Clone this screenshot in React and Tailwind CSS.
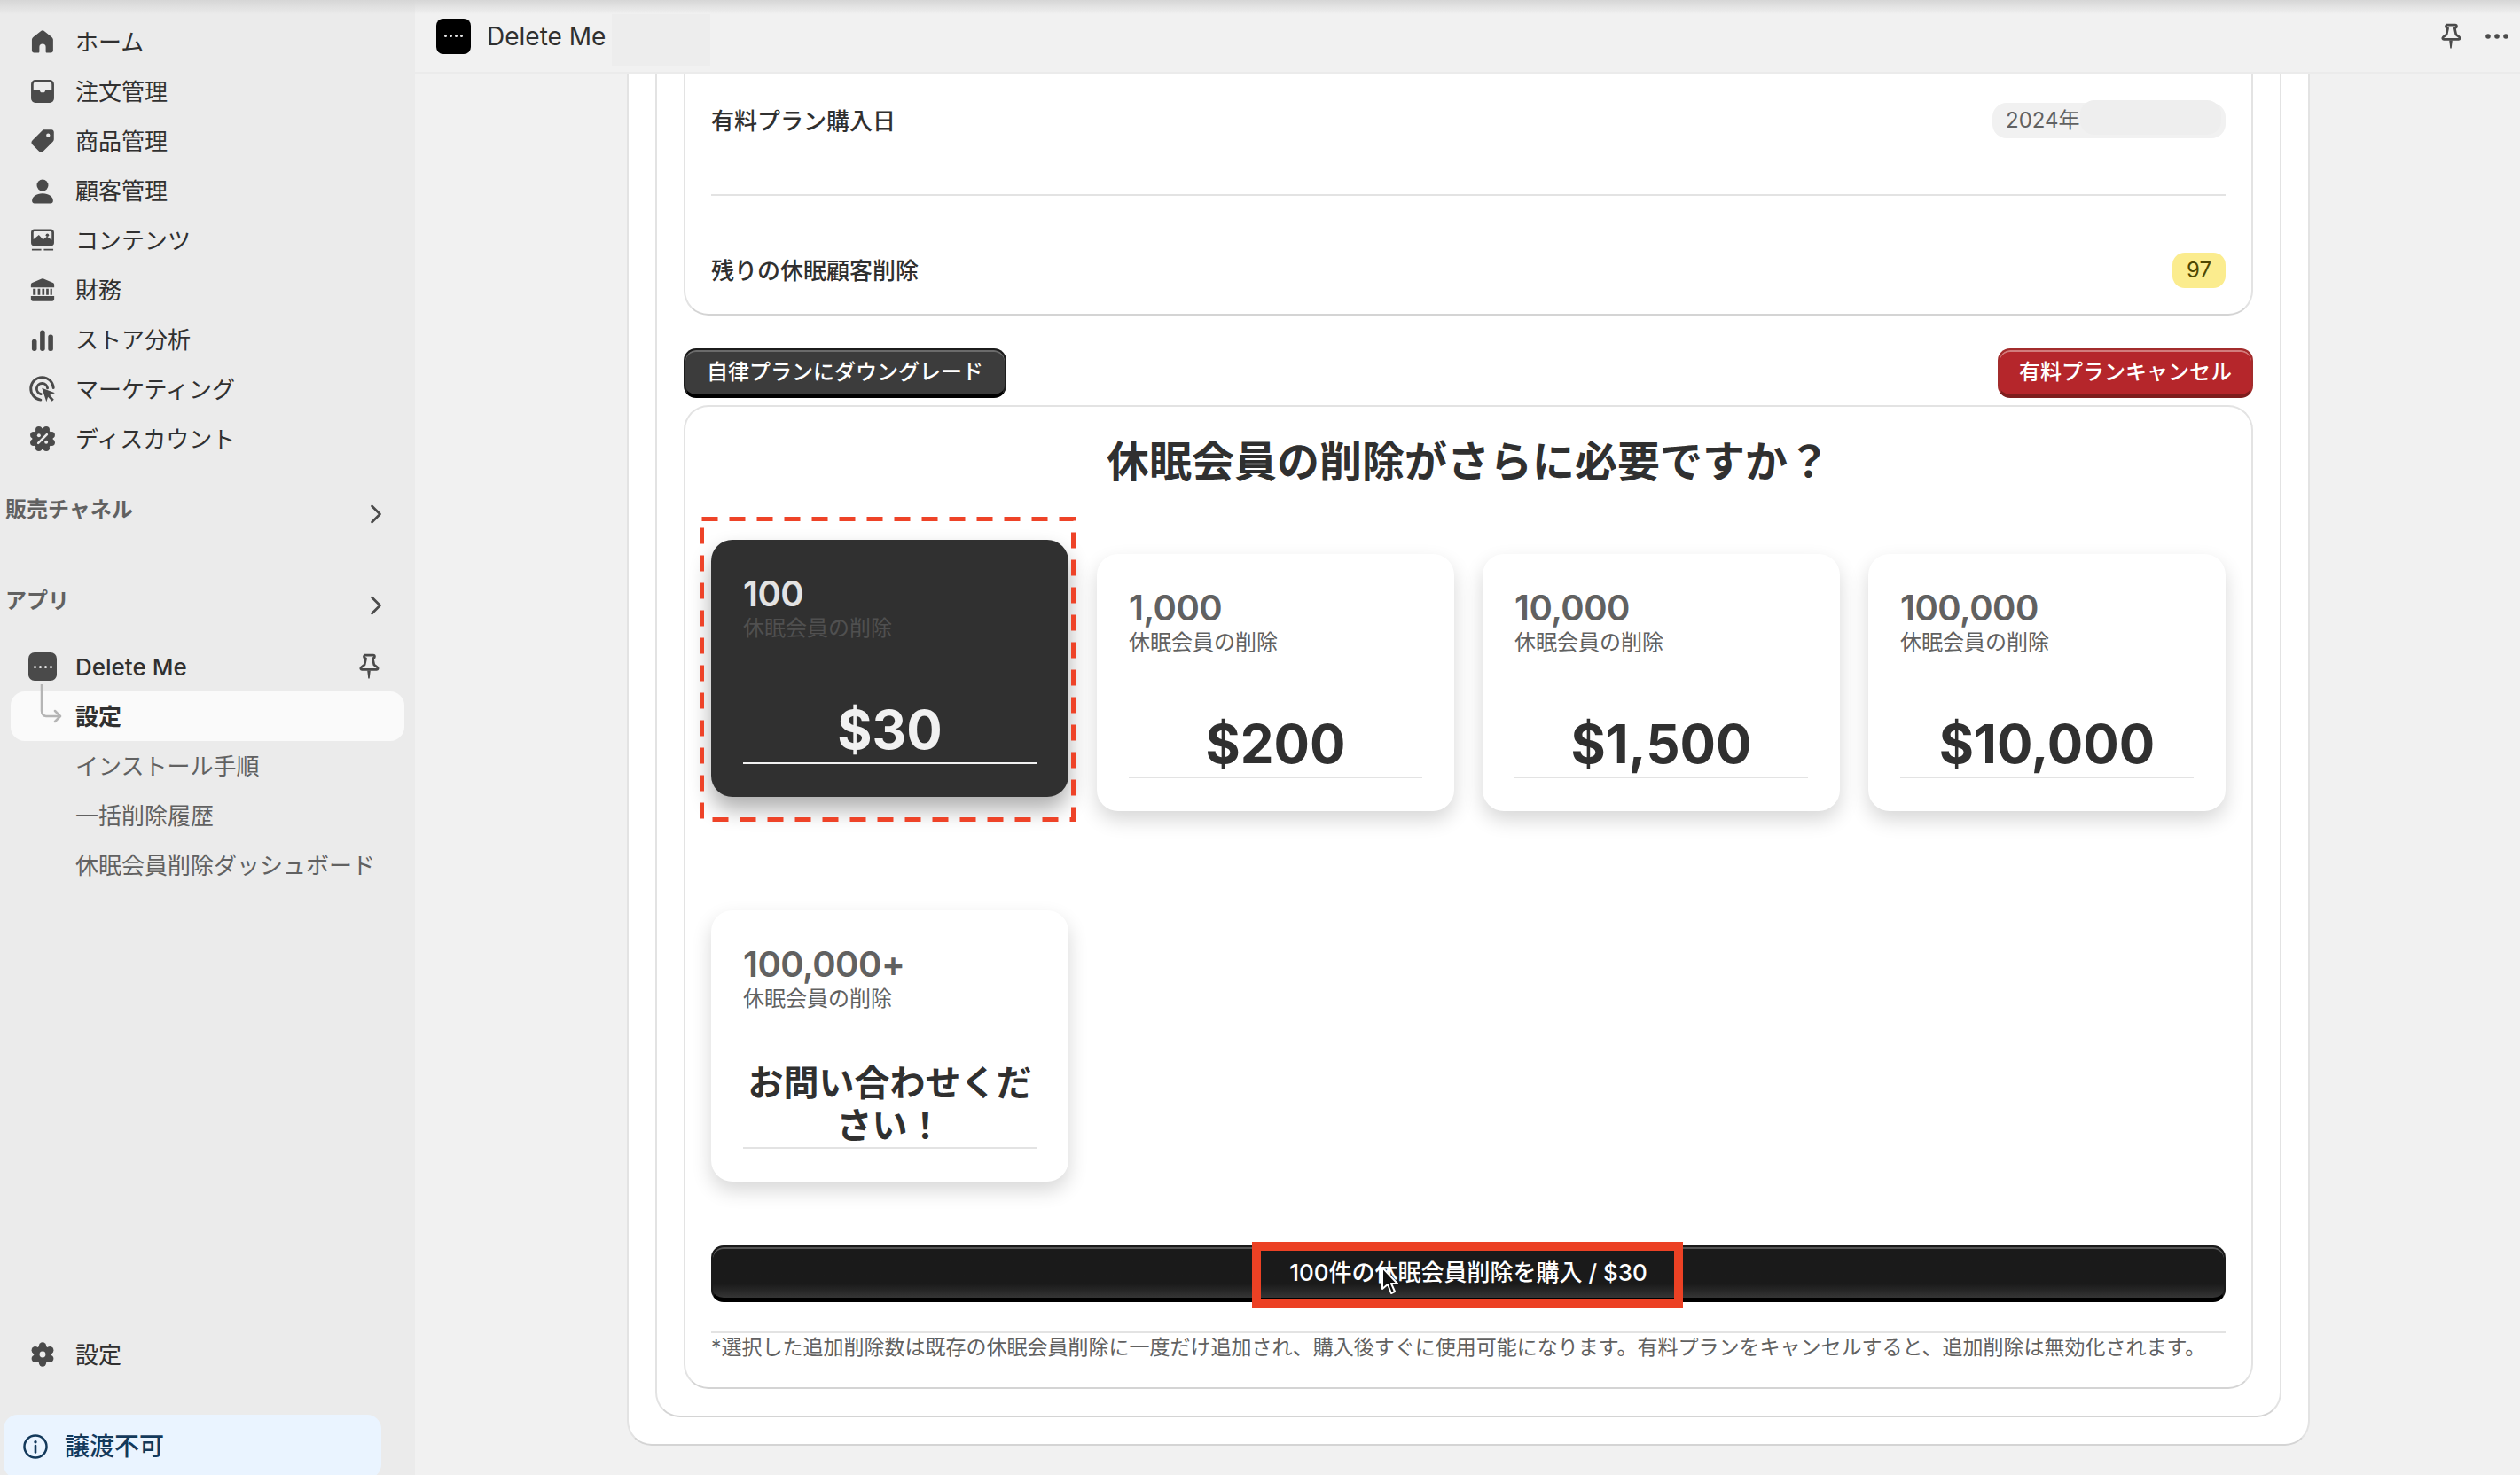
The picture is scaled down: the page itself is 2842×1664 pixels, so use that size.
import { Fragment } from 'react'

const Icon = ({ children, className = 'w-[36px] h-[36px] text-[#4a4a4a]' }) => (
  <svg viewBox="0 0 20 20" fill="currentColor" className={`${className} shrink-0`}>
    {children}
  </svg>
)

const HomeIcon = () => (
  <Icon>
    <path d="M9.2 3.2a1.300 1.300 0 0 1 1.600 0l4.700 3.700c.6.500 1.100 1.100 1.100 1.900v6.800c0 .8-.6 1.400-1.400 1.400h-2.500c-.4 0-.7-.3-.7-.7v-2.900a2 2 0 0 0-4 0v2.900c0 .4-.3.700-.7.700H4.700c-.8 0-1.400-.6-1.400-1.400V8.800c0-.8.500-1.400 1.100-1.900z" />
  </Icon>
)
const OrdersIcon = () => (
  <Icon>
    <path
      fillRule="evenodd"
      d="M5.500 2.800h9a2.700 2.700 0 0 1 2.700 2.700v9a2.700 2.700 0 0 1-2.700 2.700h-9a2.700 2.700 0 0 1-2.700-2.700v-9a2.700 2.700 0 0 1 2.700-2.700zM4.300 5.500c0-.7.500-1.200 1.200-1.200h9c.7 0 1.200.5 1.200 1.200v3.500h-3.200c-.4 0-.7.2-.8.6l-.3.7c-.1.3-.3.4-.6.4H9.200c-.3 0-.5-.1-.6-.4l-.3-.7c-.1-.4-.4-.6-.8-.6H4.300z"
    />
  </Icon>
)
const TagIcon = () => (
  <Icon>
    <path
      fillRule="evenodd"
      d="M11 2.900h4.600c.8 0 1.500.7 1.500 1.500V9c0 .5-.2 1-.6 1.400l-6 6a2 2 0 0 1-2.800 0l-4-4a2 2 0 0 1 0-2.800l6-6c.3-.4.800-.7 1.300-.7zM13.500 5.300a1.200 1.200 0 1 0 0 2.400 1.200 1.200 0 0 0 0-2.400z"
    />
  </Icon>
)
const PersonIcon = () => (
  <Icon>
    <circle cx="10" cy="6.700" r="3.600" />
    <path d="M3.400 16.500c0-2.700 2.600-4.700 6.600-4.700s6.600 2 6.600 4.700c0 .9-.7 1.500-1.500 1.500H4.900c-.8 0-1.500-.6-1.500-1.500z" />
  </Icon>
)
const ContentIcon = () => (
  <Icon>
    <path
      fillRule="evenodd"
      d="M4.800 3h10.400c1.100 0 2 .9 2 2v6.600c0 1.100-.9 2-2 2H4.800c-1.100 0-2-.9-2-2V5c0-1.100.9-2 2-2zM4.300 5.200c0-.4.300-.7.700-.7h10c.4 0 .7.300.7.700v4.700l-2.900-2.300-2.500 2-2.600-3-3.400 2.900z"
    />
    <circle cx="13" cy="6.800" r="1" />
    <path d="M3.300 15.400h5.900v1H3.300zM10.800 15.400h5.900v1h-5.900z" />
  </Icon>
)
const BankIcon = () => (
  <Icon>
    <path d="M9.400 3.100a1.500 1.500 0 0 1 1.200 0l5.900 2.500c.500.200.800.700.800 1.200v1.700H2.700V6.800c0-.5.300-1 .8-1.200z" />
    <path d="M4 9.300h1.700v3.900H4zM7 9.300h1.500v3.900H7zM9.700 9.300h1.500v3.900H9.700zM12.300 9.300h1.500v3.900h-1.500zM14.800 9.300H16v3.900h-1.200z" />
    <path d="M2.700 13.900h14.600v2c0 .7-.5 1.200-1.200 1.200H3.900c-.7 0-1.200-.5-1.200-1.200z" />
  </Icon>
)
const BarsIcon = () => (
  <Icon>
    <rect x="3.300" y="9.800" width="3.100" height="7.400" rx="1.500" />
    <rect x="8.400" y="4.100" width="3.100" height="13.100" rx="1.500" />
    <rect x="13.500" y="6.900" width="3.100" height="10.300" rx="1.400" />
  </Icon>
)
const TargetIcon = () => (
  <Icon>
    <path
      d="M8.800 16.700A7.100 7.100 0 1 1 16.800 9.200M9 13.100A3.400 3.400 0 1 1 13.100 9.400"
      fill="none"
      stroke="currentColor"
      strokeWidth="1.600"
      strokeLinecap="round"
    />
    <path d="M9.600 9.300l8.100 3.100-3.100 1.300 2.500 2.800-1.200 1.100-2.500-2.800-1 3.100z" />
  </Icon>
)
const DiscountIcon = () => (
  <Icon>
    <circle cx="10" cy="10" r="6.500" />
    {[0, 45, 90, 135, 180, 225, 270, 315].map((a) => (
      <circle
        key={a}
        cx={10 + 6.100 * Math.cos((a * Math.PI) / 180 + Math.PI / 8)}
        cy={10 + 6.100 * Math.sin((a * Math.PI) / 180 + Math.PI / 8)}
        r="2.100"
      />
    ))}
    <path d="M7.300 12.700l5.400-5.400" stroke="#ebebeb" strokeWidth="1.400" strokeLinecap="round" />
    <circle cx="7.700" cy="7.900" r="1.100" fill="#ebebeb" />
    <circle cx="12.300" cy="12.100" r="1.100" fill="#ebebeb" />
  </Icon>
)
const GearIcon = () => (
  <Icon>
    <circle cx="10" cy="10" r="5.500" />
    {[90, 150, 210, 270, 330, 30].map((a) => (
      <circle
        key={a}
        cx={10 + 5.300 * Math.cos((a * Math.PI) / 180)}
        cy={10 + 5.300 * Math.sin((a * Math.PI) / 180)}
        r="2.300"
      />
    ))}
    <circle cx="10" cy="10" r="1.900" fill="#ebebeb" />
  </Icon>
)
const PinIcon = () => (
  <Icon>
    <path
      d="M7.300 2.900h5.400c.5 0 .9.400.9.900 0 .4-.2.700-.5.800l-.7.400.8 3.800 2.200 1.800c.5.500.2 1.300-.5 1.300H5.600c-.7 0-1-.8-.5-1.300l2.200-1.800.8-3.800-.7-.4c-.3-.1-.5-.4-.5-.8 0-.5.400-.9.900-.9z"
      fill="none"
      stroke="currentColor"
      strokeWidth="1.500"
      strokeLinejoin="round"
    />
    <path d="M9 12.500h2l-.6 5h-.8z" />
  </Icon>
)
const ChevronIcon = () => (
  <Icon>
    <path d="M7.500 5l5 5-5 5" fill="none" stroke="currentColor" strokeWidth="1.500" strokeLinecap="round" strokeLinejoin="round" />
  </Icon>
)

const LogoDots = ({ className }) => (
  <div className={`flex items-center justify-center gap-[3px] shrink-0 ${className}`}>
    {[0, 1, 2, 3].map((i) => (
      <span key={i} className="w-[3px] h-[3px] rounded-full bg-[#e8e8e8]" />
    ))}
  </div>
)

const navItems = [
  ['ホーム', HomeIcon],
  ['注文管理', OrdersIcon],
  ['商品管理', TagIcon],
  ['顧客管理', PersonIcon],
  ['コンテンツ', ContentIcon],
  ['財務', BankIcon],
  ['ストア分析', BarsIcon],
  ['マーケティング', TargetIcon],
  ['ディスカウント', DiscountIcon],
]

const plans = [
  { count: '100', price: '$30', selected: true },
  { count: '1,000', price: '$200' },
  { count: '10,000', price: '$1,500' },
  { count: '100,000', price: '$10,000' },
  { count: '100,000+', contact: true },
]

const SectionHead = ({ label, className }) => (
  <div className={`h-[56px] flex items-center justify-between pl-[6px] pr-[26px] ${className}`}>
    <span className="text-[24px] font-semibold text-[#616161] pb-[10px]">{label}</span>
    <ChevronIcon />
  </div>
)

const Sidebar = () => (
  <aside className="w-[468px] shrink-0 bg-[#ebebeb] flex flex-col justify-between text-[26px] text-[#303030]">
    <div>
      <nav className="pt-[19px]">
        {navItems.map(([label, NavIcon]) => (
          <div key={label} className="h-[56px] flex items-center pl-[30px] gap-[19px]">
            <NavIcon />
            <span>{label}</span>
          </div>
        ))}
      </nav>
      <SectionHead label="販売チャネル" className="mt-[29px]" />
      <SectionHead label="アプリ" className="mt-[47px]" />
      <div className="relative mt-[13px]">
        <div className="h-[56px] flex items-center pl-[32px] pr-[34px]">
          <LogoDots className="w-[32px] h-[32px] rounded-[7px] bg-[#4a4a4a]" />
          <span className="ml-[21px] font-medium">Delete Me</span>
          <span className="ml-auto">
            <PinIcon />
          </span>
        </div>
        <div className="mx-[12px] h-[56px] flex items-center pl-[73px] rounded-[16px] bg-[#fafafa] font-semibold">
          設定
        </div>
        <div className="mx-[12px] h-[56px] flex items-center pl-[73px] text-[#616161]">インストール手順</div>
        <div className="mx-[12px] h-[56px] flex items-center pl-[73px] text-[#616161]">一括削除履歴</div>
        <div className="mx-[12px] h-[56px] flex items-center pl-[73px] text-[#616161]">休眠会員削除ダッシュボード</div>
        <svg viewBox="0 0 28 46" className="absolute left-[44px] top-[48px] w-[28px] h-[46px]" fill="none">
          <path d="M3 0v30c0 3 2 6 5 6h15M18 30l6 6-6 6" stroke="#b5b5b5" strokeWidth="2.500" strokeLinecap="round" strokeLinejoin="round" />
        </svg>
      </div>
    </div>
    <div>
      <div className="h-[56px] flex items-center pl-[30px] gap-[19px]">
        <GearIcon />
        <span>設定</span>
      </div>
      <div className="mt-[40px] ml-[4px] -mb-[4px] w-[426px] h-[72px] rounded-[16px] bg-[#eaf4ff] flex items-center pl-[22px] gap-[19px] text-[28px] font-medium text-[#13395b]">
        <svg viewBox="0 0 28 28" className="w-[28px] h-[28px]" fill="none">
          <circle cx="14" cy="14" r="12.500" stroke="currentColor" strokeWidth="2.500" />
          <circle cx="14" cy="8.800" r="1.700" fill="currentColor" />
          <path d="M14 13v7.500" stroke="currentColor" strokeWidth="2.600" strokeLinecap="round" />
        </svg>
        <span>譲渡不可</span>
      </div>
    </div>
  </aside>
)

const Header = () => (
  <header className="h-[83px] shrink-0 bg-[#f1f1f1] border-b-2 border-[#ebebeb] flex items-center pl-[24px] pr-[12px]">
    <LogoDots className="w-[39px] h-[40px] rounded-[8px] bg-black" />
    <span className="ml-[18px] text-[28px] text-[#303030]">Delete Me</span>
    <div className="ml-[7px] mt-[8px] w-[111px] h-[58px] bg-[#ededed]" />
    <div className="ml-auto flex items-center gap-[20px]">
      <PinIcon />
      <svg viewBox="0 0 28 8" fill="#4a4a4a" className="w-[28px] h-[8px]">
        <circle cx="4" cy="4" r="2.800" />
        <circle cx="14" cy="4" r="2.800" />
        <circle cx="24" cy="4" r="2.800" />
      </svg>
    </div>
  </header>
)

const PlanCard = ({ plan }) => {
  const { count, price, selected, contact } = plan
  return (
    <div
      className={`relative rounded-[24px] px-[36px] pt-[36px] ${contact ? 'h-[306px]' : 'h-[290px]'} ${
        selected
          ? '-translate-y-4 bg-[#303030] shadow-[0_14px_24px_rgba(0,0,0,0.32)]'
          : 'bg-white shadow-[0_10px_22px_rgba(0,0,0,0.16)]'
      }`}
    >
      <div className={`text-[40px] leading-[50px] font-semibold tracking-[-0.5px] ${selected ? 'text-[#e3e3e3]' : 'text-[#616161]'}`}>{count}</div>
      <div className={`text-[24px] leading-[28px] ${selected ? 'text-[#505050]' : 'text-[#616161]'}`}>休眠会員の削除</div>
      {contact ? (
        <div className="mt-[57px] border-b-2 border-[#e3e3e3] text-center text-[40px] leading-[48px] font-semibold text-[#303030]">
          お問い合わせください！
        </div>
      ) : (
        <div
          className={`mt-[57px] h-[82px] pt-[3px] border-b-2 text-center text-[60px] leading-[80px] font-bold ${
            selected ? 'border-[#f1f1f1] text-[#f1f1f1]' : 'border-[#e3e3e3] text-[#303030]'
          }`}
        >
          {price}
        </div>
      )}
      {selected && (
        <svg className="absolute left-[-13px] top-[-26px] w-[424px] h-[344px]" viewBox="0 0 424 344" fill="none">
          <rect x="2.500" y="2.500" width="419" height="339" stroke="#ee4328" strokeWidth="5" strokeDasharray="18 13" />
        </svg>
      )}
    </div>
  )
}

const Card = ({ className = '', children }) => (
  <div className={`rounded-[28px] border-2 border-[#e3e3e3] border-b-[#d4d4d4] bg-white px-[29px] ${className}`}>{children}</div>
)

const BuyButton = () => (
  <div className="relative mt-[72px] h-[64px] rounded-[14px] border-x-2 border-t-2 border-b-[5px] border-[#1a1a1a] border-b-black bg-linear-to-b from-[#1a1a1a] from-[72%] to-[#353535] shadow-[inset_0_2px_0_#555555] flex items-center justify-center text-[26px] font-medium text-white">
    100件の休眠会員削除を購入 / $30
    <div className="absolute left-[608px] top-[-6px] w-[486px] h-[75px] border-[10px] border-[#ec4124]" />
    <svg viewBox="0 0 20 32" className="absolute left-[753px] top-[22px] w-[20px] h-[32px]">
      <path d="M2 1v24l6-5 4 10 4-2-4-9h7z" fill="#111111" stroke="#ffffff" strokeWidth="2" strokeLinejoin="round" />
    </svg>
  </div>
)

export default function App() {
  return (
    <div className="relative w-[2842px] h-[1664px] flex overflow-hidden bg-[#f1f1f1] font-['Inter','Noto_Sans_CJK_JP',sans-serif]">
      <Sidebar />
      <div className="flex-1 min-w-0 flex flex-col">
        <Header />
        <main className="flex-1 min-h-0">
          <div className="ml-[239px] w-[1898px] bg-white border-x-2 border-b-2 border-[#e3e3e3] border-b-[#d4d4d4] rounded-b-[28px] px-[30px] pb-[30px]">
            <div className="bg-white border-x-2 border-b-2 border-[#e3e3e3] border-b-[#d4d4d4] rounded-b-[28px] px-[30px] pb-[30px]">
              <Card className="rounded-t-none border-t-0 pt-[33px] pb-[29px]">
                <div className="flex items-center justify-between h-[40px] text-[26px] font-medium text-[#303030]">
                  <span>有料プラン購入日</span>
                  <div className="relative w-[263px] h-[40px] rounded-[16px] bg-[#f1f1f1] flex items-center pl-[15px] text-[24px] font-normal text-[#616161]">
                    2024年
                    <div className="absolute right-[5px] top-[-3px] w-[159px] h-[39px] rounded-[16px] bg-[#eeeeee]" />
                  </div>
                </div>
                <div className="mt-[63px] mb-[64px] border-t-2 border-[#e3e3e3]" />
                <div className="flex items-center justify-between h-[40px] text-[26px] font-medium text-[#303030]">
                  <span>残りの休眠顧客削除</span>
                  <span className="w-[60px] h-[40px] rounded-[14px] bg-[#fbec8e] flex items-center justify-center text-[24px] font-normal text-[#4f4700]">97</span>
                </div>
              </Card>
              <div className="mt-[37px] flex justify-between text-[24px] font-medium text-white">
                <button className="h-[56px] px-[24px] rounded-[14px] border-2 border-[#1c1c1c] border-b-4 border-b-black bg-[#3c3c3c] shadow-[inset_0_2px_0_#6b6b6b]">
                  自律プランにダウングレード
                </button>
                <button className="h-[56px] px-[22px] rounded-[14px] border-2 border-[#a32c2c] border-b-4 border-b-[#7e1d1d] bg-[#b5262b] shadow-[inset_0_2px_0_#d27c7c]">
                  有料プランキャンセル
                </button>
              </div>
              <Card className="mt-[8px] pt-[30px] pb-[28px]">
                <h2 className="text-center text-[48px] leading-[64px] font-semibold text-[#303030]">
                  休眠会員の削除がさらに必要ですか？
                </h2>
                <div className="mt-[72px] grid grid-cols-4 gap-x-[32px] gap-y-[112px] items-start">
                  {plans.map((plan) => (
                    <Fragment key={plan.count}>
                      <PlanCard plan={plan} />
                    </Fragment>
                  ))}
                </div>
                <BuyButton />
                <p className="mt-[33px] border-t-2 border-[#e3e3e3] text-[23px] leading-[33px] text-[#616161]">
                  *選択した追加削除数は既存の休眠会員削除に一度だけ追加され、購入後すぐに使用可能になります。有料プランをキャンセルすると、追加削除は無効化されます。
                </p>
              </Card>
            </div>
          </div>
        </main>
      </div>
      <div className="absolute inset-x-0 top-0 h-[16px] bg-linear-to-b from-[#d6d6d6] to-transparent pointer-events-none" />
    </div>
  )
}
